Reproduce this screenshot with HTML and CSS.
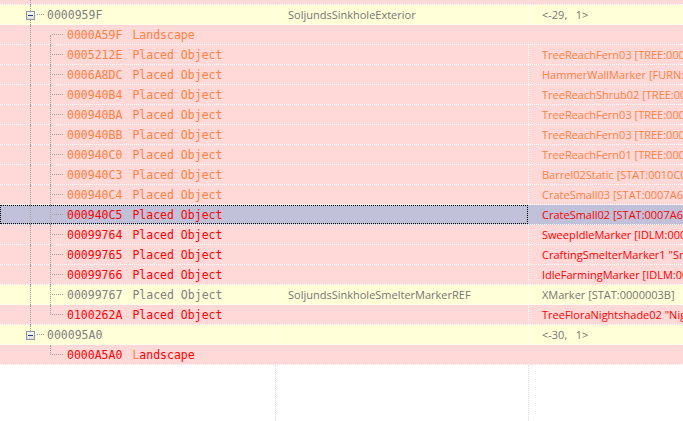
FILE: index.html
```html
<!DOCTYPE html>
<html>
<head>
<meta charset="utf-8">
<link rel="stylesheet" href="styles.css">
</head>
<body>
<div class="grid">
  <div class="row pink land top">
    <div class="c1"><span class="ind v"></span><span class="ind vt h"></span><span class="txt or">0000A59E</span><span class="txt2 or">Landscape</span></div>
    <div class="c2"></div><div class="c3"></div>
  </div>
  <div class="row yellow par">
    <div class="c1"><span class="ind v box"></span><span class="txt p gray">0000959F</span></div>
    <div class="c2 gray2">SoljundsSinkholeExterior</div><div class="c3 gray2">&lt;-29,&nbsp;&nbsp; 1&gt;</div>
  </div>
  <div class="row pink land">
    <div class="c1"><span class="ind v"></span><span class="ind vb h"></span><span class="txt or">0000A59F</span><span class="txt2 or">Landscape</span></div>
    <div class="c2"></div><div class="c3"></div>
  </div>
  <div class="row pink obj">
    <div class="c1"><span class="ind v"></span><span class="ind v h"></span><span class="txt or">0005212E</span><span class="txt2 or">Placed Object</span></div>
    <div class="c2"></div><div class="c3 or">TreeReachFern03 [TREE:0001B3F9]</div>
  </div>
  <div class="row pink obj">
    <div class="c1"><span class="ind v"></span><span class="ind v h"></span><span class="txt or">0006A8DC</span><span class="txt2 or">Placed Object</span></div>
    <div class="c2"></div><div class="c3 or">HammerWallMarker [FURN:0006A8DB]</div>
  </div>
  <div class="row pink obj">
    <div class="c1"><span class="ind v"></span><span class="ind v h"></span><span class="txt or">000940B4</span><span class="txt2 or">Placed Object</span></div>
    <div class="c2"></div><div class="c3 or">TreeReachShrub02 [TREE:0001B3F0]</div>
  </div>
  <div class="row pink obj">
    <div class="c1"><span class="ind v"></span><span class="ind v h"></span><span class="txt or">000940BA</span><span class="txt2 or">Placed Object</span></div>
    <div class="c2"></div><div class="c3 or">TreeReachFern03 [TREE:0001B3F9]</div>
  </div>
  <div class="row pink obj">
    <div class="c1"><span class="ind v"></span><span class="ind v h"></span><span class="txt or">000940BB</span><span class="txt2 or">Placed Object</span></div>
    <div class="c2"></div><div class="c3 or">TreeReachFern03 [TREE:0001B3F9]</div>
  </div>
  <div class="row pink obj">
    <div class="c1"><span class="ind v"></span><span class="ind v h"></span><span class="txt or">000940C0</span><span class="txt2 or">Placed Object</span></div>
    <div class="c2"></div><div class="c3 or">TreeReachFern01 [TREE:0001B3F7]</div>
  </div>
  <div class="row pink obj">
    <div class="c1"><span class="ind v"></span><span class="ind v h"></span><span class="txt or">000940C3</span><span class="txt2 or">Placed Object</span></div>
    <div class="c2"></div><div class="c3 or">Barrel02Static [STAT:0010C0A1]</div>
  </div>
  <div class="row pink obj">
    <div class="c1"><span class="ind v"></span><span class="ind v h"></span><span class="txt or">000940C4</span><span class="txt2 or">Placed Object</span></div>
    <div class="c2"></div><div class="c3 or">CrateSmall03 [STAT:0007A6B2]</div>
  </div>
  <div class="row sel obj">
    <div class="c1"><span class="ind v"></span><span class="ind v h"></span><span class="txt red">000940C5</span><span class="txt2 red">Placed Object</span></div>
    <div class="c2"></div><div class="c3 red">CrateSmall02 [STAT:0007A6B1]</div>
  </div>
  <div class="row pink obj">
    <div class="c1"><span class="ind v"></span><span class="ind v h"></span><span class="txt red">00099764</span><span class="txt2 red">Placed Object</span></div>
    <div class="c2"></div><div class="c3 red">SweepIdleMarker [IDLM:0009A0B2]</div>
  </div>
  <div class="row pink obj">
    <div class="c1"><span class="ind v"></span><span class="ind v h"></span><span class="txt red">00099765</span><span class="txt2 red">Placed Object</span></div>
    <div class="c2"></div><div class="c3 red">CraftingSmelterMarker1 "Smelter"</div>
  </div>
  <div class="row pink obj">
    <div class="c1"><span class="ind v"></span><span class="ind v h"></span><span class="txt red">00099766</span><span class="txt2 red">Placed Object</span></div>
    <div class="c2"></div><div class="c3 red">IdleFarmingMarker [IDLM:0009A0B3]</div>
  </div>
  <div class="row yellow obj">
    <div class="c1"><span class="ind v"></span><span class="ind v h"></span><span class="txt gray">00099767</span><span class="txt2 gray">Placed Object</span></div>
    <div class="c2 gray2">SoljundsSinkholeSmelterMarkerREF</div><div class="c3 gray2">XMarker [STAT:0000003B]</div>
  </div>
  <div class="row pink obj">
    <div class="c1"><span class="ind v"></span><span class="ind vt h"></span><span class="txt red">0100262A</span><span class="txt2 red">Placed Object</span></div>
    <div class="c2"></div><div class="c3 red">TreeFloraNightshade02 "Nightshade"</div>
  </div>
  <div class="row yellow par">
    <div class="c1"><span class="ind vt box"></span><span class="txt p gray">000095A0</span></div>
    <div class="c2"></div><div class="c3 gray2">&lt;-30,&nbsp;&nbsp; 1&gt;</div>
  </div>
  <div class="row pink land">
    <div class="c1"><span class="ind"></span><span class="ind vt h"></span><span class="txt red">0000A5A0</span><span class="txt2 red"><span class="or">L</span>andscape</span></div>
    <div class="c2"></div><div class="c3"></div>
  </div>
  <div class="filler">
    <div class="c1"></div><div class="c2"></div><div class="c3"></div>
  </div>
</div>
</body>
</html>
```
FILE: styles.css
```css
html, body {
  margin: 0;
  padding: 0;
  background: #ffffff;
  overflow: hidden;
  height: 421px;
}

.grid {
  margin-top: -15px;
  display: flex;
  flex-direction: column;
  height: 436px;
}

.row {
  display: flex;
  height: 20px;
  box-sizing: border-box;
  border-bottom: 1px dotted #ffffff;
  position: relative;
  white-space: nowrap;
}

.pink { background: #ffd8d8; }
.yellow { background: #ffffd8; }
.sel { background: #c0c0d8; }

.sel::after {
  content: "";
  position: absolute;
  left: 0;
  top: 0;
  width: 528px;
  height: 19px;
  box-sizing: border-box;
  border: 1px dotted #000000;
}

.c1, .c2, .c3 {
  height: 19px;
  box-sizing: border-box;
  display: flex;
  align-items: center;
  overflow: hidden;
}

.c1 {
  width: 276px;
  padding-left: 20px;
  border-right: 1px dotted transparent;
  overflow: visible;
}

.top .c1 {
  align-items: flex-start;
}

.top .txt, .top .txt2 {
  line-height: 14px;
}

.c2 {
  width: 253px;
  padding-left: 12px;
  padding-bottom: 1px;
  border-right: 1px dotted transparent;
  font-family: "Open Sans", "Noto Sans", sans-serif;
  font-size: 11px;
}

.c3 {
  flex: 1;
  padding-left: 13px;
  padding-bottom: 1px;
  font-family: "Open Sans", "Noto Sans", sans-serif;
  font-size: 11px;
}

.yellow .c1, .yellow .c2 { border-right-color: #ffffff; }
.obj .c2, .par .c2 { border-right-color: #ffffff; }
.sel .c2 { border-right-color: transparent; }

.ind {
  position: relative;
  width: 20px;
  height: 19px;
  flex: none;
}

.ind.v::before,
.ind.vt::before,
.ind.vb::before {
  content: "";
  position: absolute;
  left: 10px;
  border-left: 1px dotted #a0a0a0;
}

.ind.v::before { top: 0; height: 20px; }
.ind.vt::before { top: 0; height: 10px; }
.ind.vb::before { top: 10px; height: 10px; }

.ind.h::after {
  content: "";
  position: absolute;
  left: 12px;
  top: 9px;
  width: 11px;
  border-top: 1px dotted #a0a0a0;
}

.ind.box::after {
  content: "";
  position: absolute;
  left: 6px;
  top: 6px;
  width: 9px;
  height: 9px;
  box-sizing: border-box;
  border: 1px solid #8d98a8;
  background:
    linear-gradient(#22427a, #22427a) center / 5px 1px no-repeat,
    linear-gradient(#ffffff, #dcdcdc);
}

.par .ind.box {
  width: 27px;
  background:
    repeating-linear-gradient(90deg, #a0a0a0 0 1px, transparent 1px 2px) 17px 9px / 8px 1px no-repeat;
}

.txt, .txt2 {
  font-family: "DejaVu Sans Mono", monospace;
  font-size: 11.5px;
}

.txt { margin-left: 7px; }
.txt.p { margin-left: 0; }
.txt2 { margin-left: 10px; }

.or { color: #ff8040; }
.red { color: #ff0000; }
.gray { color: #808080; }
.gray2 { color: #767676; }

.filler {
  flex: 1;
  display: flex;
}

.filler .c1, .filler .c2, .filler .c3 {
  height: auto;
}

.filler .c1, .filler .c2 {
  border-right: 1px dotted #dcdcdc;
}
```
